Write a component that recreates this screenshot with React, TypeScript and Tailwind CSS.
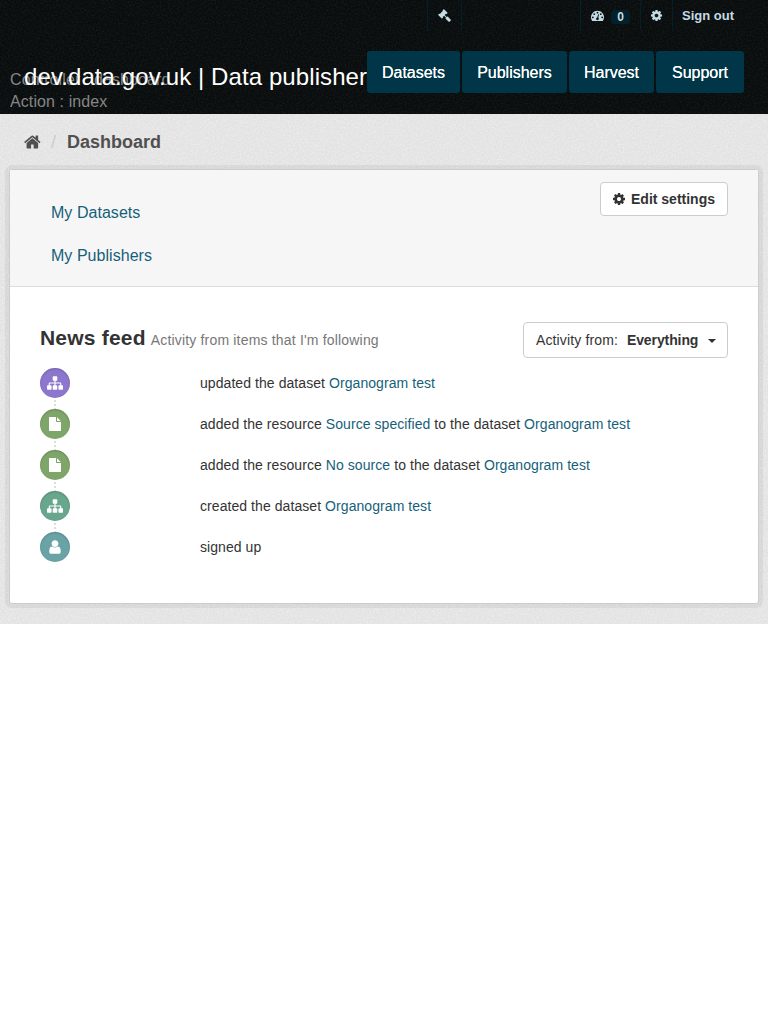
import React from "react";

const paths = {
  home: "M1408 992v480q0 26-19 45t-45 19h-384v-384h-256v384h-384q-26 0-45-19t-19-45v-480q0-1 .5-3t.5-3l575-474 575 474q1 2 1 6zm223-69l-62 74q-8 9-21 11h-3q-13 0-21-7l-692-577-692 577q-12 8-24 7-13-2-21-11l-62-74q-8-10-7-23.5t11-21.5l719-599q32-26 76-26t76 26l244 204v-195q0-14 9-23t23-9h192q14 0 23 9t9 23v408l219 182q10 8 11 21.5t-7 23.5z",
  cog: "M1152 896q0-106-75-181t-181-75-181 75-75 181 75 181 181 75 181-75 75-181zm512-109v222q0 12-8 23t-20 13l-185 28q-19 54-39 91 35 50 107 138 10 12 10 25t-9 23q-27 37-99 108t-94 71q-12 0-26-9l-138-108q-44 23-91 38-16 136-29 186-7 28-36 28h-222q-14 0-24.5-8.5t-11.5-21.5l-28-184q-49-16-90-37l-141 107q-10 9-25 9-14 0-25-11-126-114-165-168-7-10-7-23 0-12 8-23 15-21 51-66.5t54-70.5q-27-50-41-99l-183-27q-13-2-21-12.5t-8-23.5v-222q0-12 8-23t19-13l186-28q14-46 39-92-40-57-107-138-10-12-10-24 0-10 9-23 26-36 98.5-107.5t94.5-71.5q13 0 26 10l138 107q44-23 91-38 16-136 29-186 7-28 36-28h222q14 0 24.5 8.5t11.5 21.5l28 184q49 16 90 37l142-107q9-9 24-9 13 0 25 10 129 119 165 170 7 8 7 22 0 12-8 23-15 21-51 66.5t-54 70.5q26 50 41 98l183 28q13 2 21 12.5t8 23.5z",
  sitemap: "M1792 1248v320q0 40-28 68t-68 28h-320q-40 0-68-28t-28-68v-320q0-40 28-68t68-28h96v-192h-512v192h96q40 0 68 28t28 68v320q0 40-28 68t-68 28h-320q-40 0-68-28t-28-68v-320q0-40 28-68t68-28h96v-192h-512v192h96q40 0 68 28t28 68v320q0 40-28 68t-68 28h-320q-40 0-68-28t-28-68v-320q0-40 28-68t68-28h96v-192q0-52 38-90t90-38h512v-192h-96q-40 0-68-28t-28-68v-320q0-40 28-68t68-28h320q40 0 68 28t28 68v320q0 40-28 68t-68 28h-96v192h512q52 0 90 38t38 90v192h96q40 0 68 28t28 68z",
  file: "M1152 512v-472q22 14 36 28l408 408q14 14 28 36h-472zm-128 32q0 40 28 68t68 28h544v1056q0 40-28 68t-68 28h-1344q-40 0-68-28t-28-68v-1600q0-40 28-68t68-28h800v544z",
  user: "M1536 1399q0 109-62.5 187t-150.5 78h-854q-88 0-150.5-78t-62.5-187q0-85 8.5-160.5t31.5-152 58.5-131 94-89 134.5-34.5q131 128 313 128t313-128q76 0 134.5 34.5t94 89 58.5 131 31.5 152 8.5 160.5zm-256-887q0 159-112.5 271.5t-271.5 112.5-271.5-112.5-112.5-271.5 112.5-271.5 271.5-112.5 271.5 112.5 112.5 271.5z",
  gavel: "M1771 1536q0 53-37 90l-107 108q-39 37-91 37-53 0-90-37l-363-364q-38-36-38-90 0-53 43-96l-256-256-126 126q-14 14-34 14t-34-14q2 2 12.5 12t12.5 13 10 11.5 10 13.5 6 13.5 5.5 16.5 1.5 18q0 38-28 68-3 3-16.5 18t-19 20.5-18.5 16.5-22 15.5-22 9-26 4.5q-40 0-68-28l-408-408q-28-28-28-68 0-13 4.5-26t9-22 15.5-22 16.5-18.5 20.5-19 18-16.5q30-28 68-28 10 0 18 1.5t16.5 5.5 13.5 6 13.5 10 11.5 10 13 12.5 12 12.5q-14-14-14-34t14-34l348-348q14-14 34-14t34 14q-2-2-12.5-12t-12.5-13-10-11.5-10-13.5-6-13.5-5.5-16.5-1.5-18q0-38 28-68 3-3 16.5-18t19-20.5 18.5-16.5 22-15.5 22-9 26-4.5q40 0 68 28l408 408q28 28 28 68 0 13-4.5 26t-9 22-15.5 22-16.5 18.5-20.5 19-18 16.5q-30 28-68 28-10 0-18-1.5t-16.5-5.5-13.5-6-13.5-10-11.5-10-13-12.5-12-12.5q14 14 14 34t-14 34l-126 126 256 256q43-43 96-43 52 0 91 37l363 363q37 39 37 91z",
  gauge: "M384 1152q0-53-37.5-90.5t-90.5-37.5-90.5 37.5-37.5 90.5 37.5 90.5 90.5 37.5 90.5-37.5 37.5-90.5zm192-448q0-53-37.5-90.5t-90.5-37.5-90.5 37.5-37.5 90.5 37.5 90.5 90.5 37.5 90.5-37.5 37.5-90.5zm428 481l101-382q6-26-7.5-48.5t-38.5-29.5-48 6.5-30 39.5l-101 382q-60 5-107 43.5t-63 98.5q-20 77 20 146t117 89 146-20 89-117q16-60-6-117t-72-91zm660-33q0-53-37.5-90.5t-90.5-37.5-90.5 37.5-37.5 90.5 37.5 90.5 90.5 37.5 90.5-37.5 37.5-90.5zm-640-640q0-53-37.5-90.5t-90.5-37.5-90.5 37.5-37.5 90.5 37.5 90.5 90.5 37.5 90.5-37.5 37.5-90.5zm448 192q0-53-37.5-90.5t-90.5-37.5-90.5 37.5-37.5 90.5 37.5 90.5 90.5 37.5 90.5-37.5 37.5-90.5zm320 448q0 261-141 483-19 29-54 29h-1402q-35 0-54-29-141-221-141-483 0-182 71-348t191-286 286-191 348-71 348 71 286 191 191 286 71 348z",
};

type IconName = keyof typeof paths;

function Icon({ name, className }: { name: IconName; className: string }) {
  return (
    <svg viewBox="0 0 1792 1792" className={className} fill="currentColor" aria-hidden="true">
      <path d={paths[name]} />
    </svg>
  );
}

function Grain({ id, className }: { id: string; className: string }) {
  return (
    <svg className={className} aria-hidden="true">
      <filter id={id}>
        <feTurbulence type="fractalNoise" baseFrequency="0.6" numOctaves="2" />
        <feColorMatrix values="0 0 0 0 1  0 0 0 0 1  0 0 0 0 1  2 0 0 0 -0.8" />
      </filter>
      <rect width="100%" height="100%" filter={`url(#${id})`} />
    </svg>
  );
}

function A({ children }: { children: React.ReactNode }) {
  return <a href="#" className="text-[#165f7a]">{children}</a>;
}

const navItems = [
  { label: "Datasets", width: "w-[93px]" },
  { label: "Publishers", width: "w-[105px]" },
  { label: "Harvest", width: "w-[85px]" },
  { label: "Support", width: "w-[88px]" },
];

const feed: { icon: IconName; color: string; size: string; text: React.ReactNode }[] = [
  { icon: "sitemap", color: "bg-[#8c76ce]", size: "size-4", text: <>updated the dataset <A>Organogram test</A></> },
  { icon: "file", color: "bg-[#7fa669]", size: "size-3.5", text: <>added the resource <A>Source specified</A> to the dataset <A>Organogram test</A></> },
  { icon: "file", color: "bg-[#7fa669]", size: "size-3.5", text: <>added the resource <A>No source</A> to the dataset <A>Organogram test</A></> },
  { icon: "sitemap", color: "bg-[#69a68e]", size: "size-4", text: <>created the dataset <A>Organogram test</A></> },
  { icon: "user", color: "bg-[#69a3a6]", size: "size-4", text: "signed up" },
];

export default function App() {
  return (
    <div className="min-h-screen bg-white font-['Liberation_Sans',Arial,sans-serif] text-sm leading-5 text-[#333]">
      <header className="relative h-[114px] overflow-hidden bg-[#0a0d0d]">
        <Grain id="dark-grain" className="absolute inset-0 size-full opacity-[0.06]" />
        <div className="absolute left-[10px] top-[69px] text-base leading-[22px] tracking-[0.1px] text-[#858686]">
          <p>Controller : dashboard</p>
          <p>Action : index</p>
        </div>
        <div className="relative flex h-[31px] justify-end pr-6 text-[13px] font-bold text-[#c3dbe3]">
          <div className="mr-[118px] flex w-[35px] justify-center border-x border-[#03202a] pr-px pt-[9px]">
            <Icon name="gavel" className="size-[13px]" />
          </div>
          <div className="flex w-[60px] gap-[7px] border-l border-[#03202a] pl-[10px] pt-[9px]">
            <Icon name="gauge" className="size-[13px]" />
            <span className="mt-px flex h-[14px] w-[19px] items-center justify-center rounded-[4px] bg-[#03212b] text-xs">0</span>
          </div>
          <div className="flex w-8 justify-center border-l border-[#03202a] pr-px pt-[9px]">
            <Icon name="cog" className="size-[13px]" />
          </div>
          <a href="#" className="w-[72px] whitespace-nowrap border-l border-[#03202a] pl-[9px] pt-[6px]">Sign out</a>
        </div>
        <div className="relative flex pl-6 pt-5">
          <h1 className="w-[343px] whitespace-nowrap pt-[11px] text-2xl leading-[30px] tracking-[0.09px] text-white">dev.data.gov.uk | Data publisher</h1>
          <nav className="flex gap-[2px] text-base text-white">
            {navItems.map((n) => (
              <a key={n.label} href="#" className={`${n.width} flex h-[42px] items-center justify-center rounded-[3px] bg-[#003647] pt-[2px] [text-shadow:0_0_0.5px_white]`}>
                {n.label}
              </a>
            ))}
          </nav>
        </div>
      </header>

      <main className="relative h-[510px] bg-[#e3e3e3]">
        <Grain id="light-grain" className="absolute inset-0 size-full opacity-40" />
        <div className="relative flex h-[55px] items-center pl-6 text-[18px] font-bold text-[#505050]">
          <Icon name="home" className="size-[18px]" />
          <span className="ml-[9px] font-normal text-[#ccc]">/</span>
          <span className="ml-[11px]">Dashboard</span>
        </div>
        <section className="relative mx-[9px] h-[435px] rounded-[3px] border border-[#ccc] bg-white shadow-[0_0_0_4px_rgba(0,0,0,0.05)]">
          <div className="flex h-[117px] justify-between border-b border-[#ddd] bg-[#f6f6f6] pr-[30px]">
            <nav className="flex flex-col gap-[23px] pl-[41px] pt-[33px] text-base leading-5 tracking-[0.04px]">
              <A>My Datasets</A>
              <A>My Publishers</A>
            </nav>
            <button className="mt-3 flex h-[34px] w-[128px] items-center whitespace-nowrap rounded-[4px] border border-[#ccc] bg-white pl-[11px] font-bold">
              <Icon name="cog" className="mr-[5px] size-[14px]" />
              Edit settings
            </button>
          </div>
          <div className="flex h-[81px] justify-between pl-[30px] pr-[30px] pt-[35px]">
            <h2 className="flex h-[32px] items-baseline whitespace-nowrap text-[21px] font-bold leading-[32px] tracking-[0.2px]">
              News feed
              <small className="ml-[5px] text-sm font-normal tracking-[0.18px] text-[#777]">Activity from items that I'm following</small>
            </h2>
            <button className="flex h-9 w-[205px] items-center whitespace-nowrap rounded-[4px] border border-[#ccc] bg-white pl-3">
              <span className="tracking-[0.13px]">Activity from:</span> <b className="ml-[9px] tracking-[-0.1px]">Everything</b>
              <span className="ml-[10px] mt-[2px] border-x-4 border-t-4 border-x-transparent border-t-[#333]" />
            </button>
          </div>
          <ul className="pl-[30px]">
            {feed.map((f, i) => (
              <li key={i} className="flex h-[41px]">
                <div className="flex w-[160px] flex-col">
                  <span className={`${f.color} flex size-[30px] items-center justify-center rounded-full pb-px text-white shadow-[inset_0_1px_2px_rgba(0,0,0,0.2)]`}>
                    <Icon name={f.icon} className={f.size} />
                  </span>
                  {i < 4 && <span className="ml-[14px] mt-[2px] h-[9px] w-[2px] bg-[repeating-linear-gradient(to_bottom,#ddd_0_2px,transparent_2px_4px)]" />}
                </div>
                <p className="whitespace-nowrap pt-[5px] tracking-[0.067px]">{f.text}</p>
              </li>
            ))}
          </ul>
        </section>
      </main>
    </div>
  );
}
